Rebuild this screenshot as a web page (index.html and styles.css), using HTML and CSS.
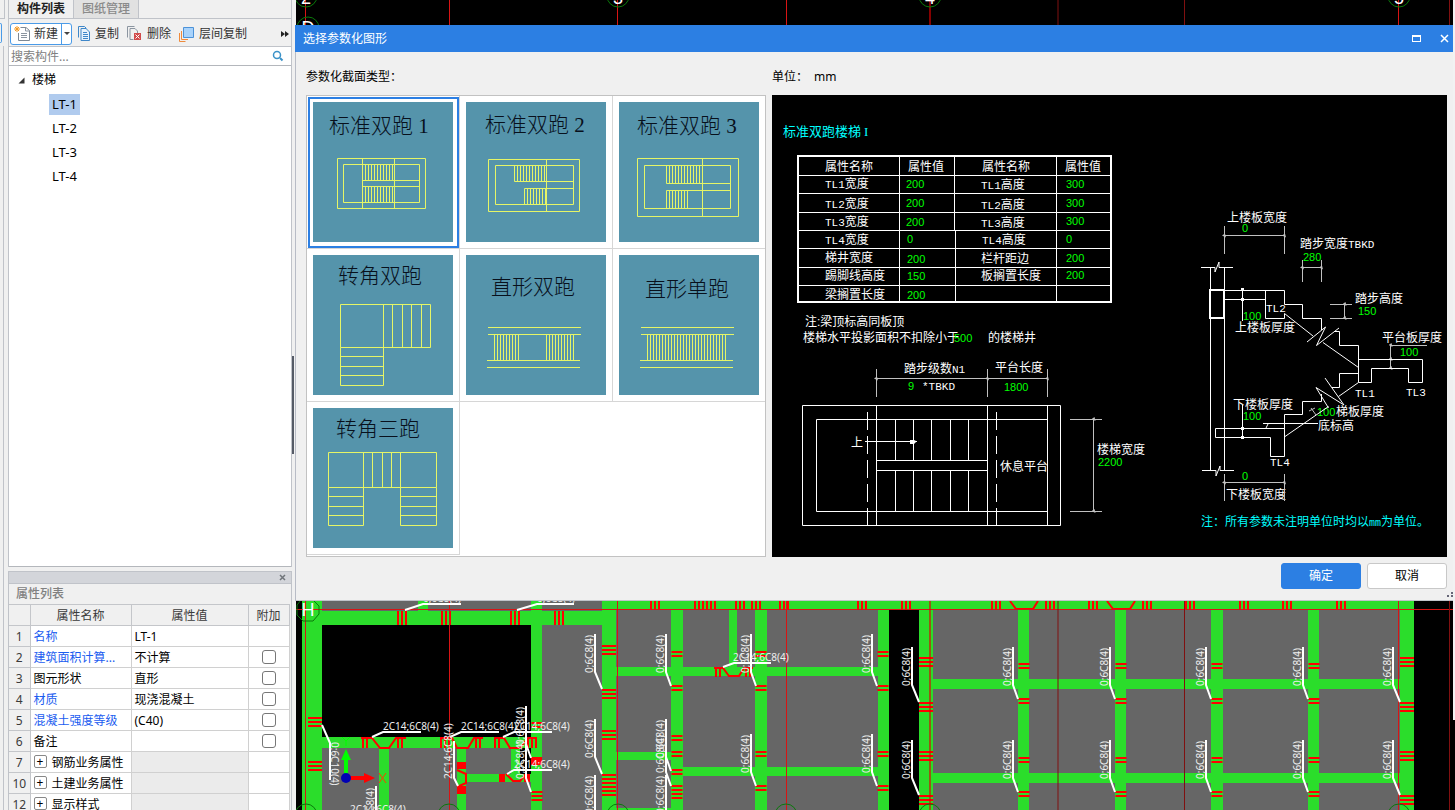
FILE: index.html
```html
<!DOCTYPE html>
<html lang="zh-CN">
<head>
<meta charset="utf-8">
<title>选择参数化图形</title>
<link rel="stylesheet" href="styles.css">
</head>
<body>
<div class="app">
  <div class="edge"><span class="edge-tab"></span></div>
  <aside class="sidebar">
    <section class="components">
      <div class="tabs" role="tablist">
        <button class="tab active" role="tab">构件列表</button>
        <button class="tab" role="tab">图纸管理</button>
      </div>
      <div class="toolbar">
        <div class="split">
          <button class="tool new">
            <svg width="18" height="16" viewBox="0 0 18 16"><path d="M4.500 7V14.500h11V4.500L12 1.500H6.500" fill="#fff" stroke="#7e8894"/><path d="M11.500 1.500V5H15.500M7 7.500h6M7 9.500h6M7 11.500h6" fill="none" stroke="#8b95a0"/><path d="M3 0V6M0 3H6M1 1L5 5M5 1L1 5" stroke="#f49a25"/></svg>
            新建</button>
          <button class="drop" aria-label="更多新建"></button>
        </div>
        <button class="tool">
          <svg width="12" height="15" viewBox="0 0 12 15"><path d="M.5 11.500V.5H6.500L8.500 2.500" fill="none" stroke="#3f87c9"/><path d="M3 2.500H8L11.500 6V14.500H3Z" fill="#e8f3fd" stroke="#3f87c9"/><path d="M5 6.500h4M5 8.500h5M5 10.500h5M5 12.500h5" stroke="#3f87c9"/></svg>
          复制</button>
        <button class="tool">
          <svg width="15" height="15" viewBox="0 0 15 15"><path d="M.5 11.500V.5H7.500M3 2.500H8L10.500 5V7M3 2.500V13.500H6.500" fill="none" stroke="#8b95a0"/><path d="M7 7h7v7H7z" fill="#d14b4b"/><path d="M8.500 8.500L12.500 12.500M12.500 8.500L8.500 12.500" stroke="#fff"/></svg>
          删除</button>
        <button class="tool">
          <svg width="15" height="16" viewBox="0 0 15 16"><path d="M.5 7V15.500H6.500M2.500 5V13.500H9" fill="none" stroke="#ee8a3c"/><path d="M4.500 1.500h10v10h-10z" fill="#a9d3fb" stroke="#4c92d8"/></svg>
          层间复制</button>
        <button class="more" aria-label="更多"><svg width="8" height="6" viewBox="0 0 8 6"><path d="M0 0L4 3L0 6ZM4 0L8 3L4 6Z" fill="#222"/></svg></button>
      </div>
      <div class="search">
        <input type="search" placeholder="搜索构件..." aria-label="搜索构件">
        <svg width="12" height="12" viewBox="0 0 12 12"><circle cx="5" cy="5" r="3.500" fill="none" stroke="#3b92c8" stroke-width="1.500"/><path d="M8 8L10.500 10.500" stroke="#3b92c8" stroke-width="2"/></svg>
      </div>
      <div class="tree">
        <div class="branch"><svg width="7" height="7" viewBox="0 0 7 7"><path d="M6.500 .5V6.500H.5Z" fill="#333"/></svg>楼梯</div>
        <ul>
          <li><button class="leaf selected">LT-1</button></li>
          <li><button class="leaf">LT-2</button></li>
          <li><button class="leaf">LT-3</button></li>
          <li><button class="leaf">LT-4</button></li>
        </ul>
      </div>
    </section>
    <section class="props">
      <div class="props-bar"><button class="close" aria-label="关闭"><svg width="7" height="7" viewBox="0 0 7 7"><path d="M1 1L6 6M6 1L1 6" stroke="#70757a" stroke-width="1.500"/></svg></button></div>
      <h2>属性列表</h2>
      <table>
        <colgroup><col class="c-no"><col class="c-name"><col class="c-value"><col class="c-add"></colgroup>
        <thead><tr><th></th><th>属性名称</th><th>属性值</th><th>附加</th></tr></thead>
        <tbody>
          <tr><th>1</th><td class="key">名称</td><td>LT-1</td><td></td></tr>
          <tr><th>2</th><td class="key">建筑面积计算...</td><td>不计算</td><td class="add"><input type="checkbox" aria-label="附加 建筑面积计算"></td></tr>
          <tr><th>3</th><td>图元形状</td><td>直形</td><td class="add"><input type="checkbox" aria-label="附加 图元形状"></td></tr>
          <tr><th>4</th><td class="key">材质</td><td>现浇混凝土</td><td class="add"><input type="checkbox" aria-label="附加 材质"></td></tr>
          <tr><th>5</th><td class="key">混凝土强度等级</td><td>(C40)</td><td class="add"><input type="checkbox" aria-label="附加 混凝土强度等级"></td></tr>
          <tr><th>6</th><td>备注</td><td></td><td class="add"><input type="checkbox" aria-label="附加 备注"></td></tr>
          <tr><th>7</th><td><button class="expand">+</button>钢筋业务属性</td><td class="off"></td><td></td></tr>
          <tr><th>10</th><td><button class="expand">+</button>土建业务属性</td><td class="off"></td><td></td></tr>
          <tr><th>12</th><td><button class="expand">+</button>显示样式</td><td class="off"></td><td></td></tr>
        </tbody>
      </table>
    </section>
  </aside>
  <div class="splitter"><span></span></div>
  <main class="workspace">
    <svg class="plan" viewBox="296 0 1159 810" preserveAspectRatio="xMinYMin slice">
      <defs>
        <g id="tag"><path d="M0 0V38L5 52" class="leader"/><text class="cad" transform="translate(-2 39) rotate(-90)">0;6C8(4)</text></g>
        <g id="tagw"><path d="M0 0V38L7 55" class="leader"/><text class="cad" transform="translate(-2 39) rotate(-90)">0;6C8(4)</text></g>
      </defs>
      <path fill="#000" d="M296 0h1159v810H296z"/>
      <path class="slab" d="M322 601h209v10H322zM322 748h209v62H322zM542 601h60v209h-60zM616 609h262v201H616zM933 609h467v201H933z"/>
      <path fill="#000" d="M520 748h11v26h-11z"/>
      <path class="beam" d="M302 601h20v209h-20zM322 611h280v14H322zM418 601h10v10h-10zM531 601h11v209h-11zM602 601h14v209h-14zM322 737h209v11H322zM379 748h10v62h-10zM457 748h9v62h-9zM511 748h9v26h-9zM466 774h65v8h-65zM616 601h303v8H616zM671 609h12v201h-12zM729 609h8v58h-8zM755 609h12v201h-12zM878 609h11v201h-11zM616 667h262v9H616zM616 752h55v8h-55zM683 767h195v9H683zM616 808h55v2h-55zM919 601h14v209h-14zM933 601h467v8H933zM1018 609h11v201h-11zM1115 609h11v201h-11zM1211 609h12v201h-12zM1308 609h11v201h-11zM1400 601h14v209h-14zM933 679h467v10H933zM933 773h467v10H933z"/>
      <g class="hatch">
        <path stroke-width="14" d="M315 717v10M315 761v10M609 645v10M609 689v10M609 730v10M609 774v10M609 786v10M926 657v10M926 702v10M926 751v10M926 795v10M1407 657v10M1407 702v10M1407 751v10M1407 795v10"/>
        <path stroke-width="11" d="M537 722v8M537 791v10M677 651v8M677 685v8M677 735v8M677 751v8M677 769v8M677 785v14M761 651v8M761 685v8M761 751v8M761 785v8M883 651v8M883 685v8M883 751v8M883 785v8M1024 663v8M1024 698v8M1024 757v8M1024 791v8M1121 663v8M1121 698v8M1121 757v8M1121 791v8M1217 663v8M1217 698v8M1217 757v8M1217 791v8M1314 663v8M1314 698v8M1314 757v8M1314 791v8"/>
        <path stroke-width="14" d="M397 618h10M441 618h10M510 618h10M554 618h10"/>
        <path stroke-width="8" d="M650 605h10M694 605h22M735 605h10M751 605h10M779 605h10M857 605h10M901 605h10M991 605h10M1045 605h10M1088 605h10M1142 605h10M1185 605h10M1239 605h10M1282 605h10M1336 605h10"/>
        <path stroke-width="10" d="M362 743h8M397 743h8M440 743h10M475 743h8M494 743h8M527 743h10M715 672h8M745 672h8"/>
      </g>
      <path fill="#f00" d="M531 757h11v8h-11zM457 762h9v7h-9zM457 786h9v8h-9zM499 774h6v8h-6zM524 774h6v8h-6z"/>
      <path class="haunch" d="M361 738h11L380 748h9L396 738h10M440 738h12L457 748h11L474 738h9M494 738h10L510 748h10L528 738h9M506 774L513 781h7L526 774M457 770L466 774V783L457 787M714 668h9L729 676h10L744 668h9M1010 601L1016 609h17L1038 601M1107 601L1113 609h17L1135 601"/>
      <path class="axis" d="M305.500 0V810M449.500 0V810M617.500 0V810M786.500 0V810M296 609.500H1453M1398.500 0V810"/>
      <path class="axis wide" d="M930 0V810"/>
      <path class="axis dark" d="M1058 0V810M1184.500 0V810M1449.500 0V810"/>
      <g class="bubble">
        <path d="M297 605L301 600H313L319 606V614L313 621H303L297 615Z"/>
        <circle cx="306" cy="-4" r="11"/><circle cx="618" cy="-4" r="11"/><circle cx="930" cy="-4" r="11"/><circle cx="1399" cy="-4" r="11"/><circle cx="308" cy="28" r="11"/>
        <circle cx="306" cy="815" r="11"/><circle cx="449" cy="815" r="11"/><circle cx="618" cy="815" r="11"/><circle cx="786" cy="815" r="11"/><circle cx="930" cy="815" r="11"/><circle cx="1399" cy="815" r="11"/>
      </g>
      <g class="bubble-text"><text x="308" y="616">H</text><text x="306" y="4">2</text><text x="618" y="4">3</text><text x="930" y="4">4</text><text x="1399" y="4">5</text><text x="308" y="34">D</text></g>
      <use href="#tagw" x="595" y="634"/><use href="#tagw" x="595" y="719"/><use href="#tagw" x="595" y="775"/>
      <use href="#tag" x="666" y="634"/><use href="#tag" x="751" y="634"/><use href="#tag" x="872" y="634"/>
      <use href="#tag" x="666" y="719"/><use href="#tag" x="666" y="734"/><use href="#tag" x="751" y="734"/><use href="#tag" x="872" y="734"/><use href="#tag" x="666" y="775"/>
      <use href="#tagw" x="912" y="647"/><use href="#tagw" x="912" y="740"/>
      <use href="#tag" x="1013" y="647"/><use href="#tag" x="1013" y="740"/><use href="#tag" x="1110" y="647"/><use href="#tag" x="1110" y="740"/>
      <use href="#tag" x="1206" y="647"/><use href="#tag" x="1206" y="740"/><use href="#tag" x="1303" y="647"/><use href="#tag" x="1303" y="740"/>
      <use href="#tagw" x="1393" y="647"/><use href="#tagw" x="1393" y="740"/>
      <use href="#tag" x="526" y="706"/><use href="#tag" x="526" y="740"/>
      <path class="leader" d="M372 737L383 732H421M450 737L461 732H499M503 737L514 732H552M507 774L514 770H552M405 610L423 604H461M517 610L537 604H574M723 667L734 663H771M376 786V810M454 741V778L458 786M322 725L330 743V780"/>
      <text class="cad" x="383" y="730">2C14;6C8(4)</text><text class="cad" x="461" y="730">2C14;6C8(4)</text><text class="cad" x="514" y="730">2C14;6C8(4)</text><text class="cad" x="514" y="768">2C14;6C8(4)</text>
      <text class="cad" x="423" y="602">0;6C8(4)</text><text class="cad" x="537" y="602">0;6C8(4)</text><text class="cad" x="733" y="661">2C14;6C8(4)</text><text class="cad" x="350" y="813">2C14;6C8(4)</text>
      <text class="cad" transform="translate(452 779) rotate(-90)">2C14;6C8(4)</text><text class="cad" transform="translate(374 826) rotate(-90)">0;6C8(4)</text><text class="cad" transform="translate(331 742) rotate(90)">0;6C10(4)</text>
      <path d="M346 776V755" stroke="#0f0" stroke-width="4"/><path d="M346 749L351 760H341Z" fill="#0f0"/>
      <path d="M348 778H366" stroke="#f00" stroke-width="4"/><path d="M375 778L364 773V783Z" fill="#f00"/><circle cx="346" cy="778" r="5" fill="#0000b4"/>
      <path d="M342 737L346 741L350 737M346 741V746" fill="none" stroke="#0f0"/><path d="M379 773L386 783M386 773L379 783" stroke="#ff3c00"/>
    </svg>
    <div class="scroll-edge"></div>
    <section class="dialog" role="dialog" aria-labelledby="dialog-title">
      <header>
        <h1 id="dialog-title">选择参数化图形</h1>
        <button aria-label="最大化"><svg width="9" height="7" viewBox="0 0 9 7"><path d="M0 1h9M.5 0V7M8.500 0V7M0 6.500H9" stroke="#fff" fill="none"/><path d="M0 0H9V2H0Z" fill="#fff"/></svg></button>
        <button aria-label="关闭"><svg width="9" height="9" viewBox="0 0 9 9"><path d="M1 1L8 8M8 1L1 8" stroke="#fff" stroke-width="1.500"/></svg></button>
      </header>
      <div class="body">
        <div class="types">
          <p>参数化截面类型：</p>
          <div class="gallery">
            <button class="shape selected" aria-label="标准双跑 1"><svg width="140" height="140" viewBox="0 0 140 140"><text x="16" y="31">标准双跑 1</text><path d="M24.500 56.500h88v50h-88zM30.500 62.500h76v38h-76zM49.500 56.500v50M81.500 56.500v50M49.500 78.500h57M49.500 84.500h57"/><path class="steps" stroke-width="16" d="M49 70.500h32M49 92.500h32"/></svg></button>
            <button class="shape" aria-label="标准双跑 2"><svg width="140" height="140" viewBox="0 0 140 140"><text x="19" y="30">标准双跑 2</text><path d="M22.500 57.500h91v52h-91zM29.500 63.500h78v39h-78zM80.500 57.500v52M48.500 79.500h59M58.500 86.500h49"/><path class="steps" stroke-width="16" d="M48 71.500h32M58 94.500h22"/></svg></button>
            <button class="shape" aria-label="标准双跑 3"><svg width="140" height="140" viewBox="0 0 140 140"><text x="18" y="31">标准双跑 3</text><path d="M18.500 56.500h101v58h-101zM25.500 63.500h86v43h-86zM83.500 56.500v58M47.500 81.500h64M47.500 88.500h64"/><path class="steps" stroke-width="18" d="M47 72.500h34M47 97.500h22"/></svg></button>
            <button class="shape" aria-label="转角双跑"><svg width="140" height="140" viewBox="0 0 140 140"><text x="25" y="28">转角双跑</text><path d="M27.500 49.500h90v43h-90zM70.500 49.500v81h-43v-38M79.500 49.500v43M89.500 49.500v43M98.500 49.500v43M108.500 49.500v43M27.500 101.500h43M27.500 111.500h43M27.500 120.500h43"/></svg></button>
            <button class="shape" aria-label="直形双跑"><svg width="140" height="140" viewBox="0 0 140 140"><text x="25" y="39">直形双跑</text><path d="M22 72.500h93M22 79.500h93M21 105.500h93M21 112.500h93"/><path class="steps" stroke-width="26" d="M28 92.500h27M80 92.500h28"/></svg></button>
            <button class="shape" aria-label="直形单跑"><svg width="140" height="140" viewBox="0 0 140 140"><text x="26" y="41">直形单跑</text><path d="M22 72.500h93M22 79.500h93M21 105.500h93M21 112.500h93"/><path class="steps" stroke-width="26" d="M28 92.500h80"/></svg></button>
            <button class="shape" aria-label="转角三跑"><svg width="140" height="140" viewBox="0 0 140 140"><text x="23" y="28">转角三跑</text><path d="M15.500 44.500h108v35h-108zM50.500 44.500v73h-35v-38M87.500 44.500v73h36v-38M59.500 44.500v35M69.500 44.500v35M78.500 44.500v35M15.500 88.500h35M15.500 98.500h35M15.500 107.500h35M87.500 88.500h36M87.500 98.500h36M87.500 107.500h36"/></svg></button>
          </div>
        </div>
        <div class="preview">
          <p>单位：<span class="unit">mm</span></p>
          <svg class="drawing" viewBox="772 95 675 462">
            <defs><marker id="end" viewBox="0 0 4 4" refX="2" refY="2" markerWidth="4" markerHeight="4"><path d="M0 2L3 0L4 4Z" fill="#c0c0c0"/></marker></defs>
            <text class="title" x="783" y="136">标准双跑楼梯<tspan x="864" class="roman">I</tspan></text>
            <path class="frame" d="M798 156H1111V302H798Z"/>
            <path class="line" d="M899.500 156V302M954.500 156V230M955.500 230V302M1056.500 156V302M798 175.500H1111M798 193.500H1111M798 212.500H1111M798 230.500H1111M798 248.500H1111M798 267.500H1111M798 285.500H1111"/>
            <g class="name">
              <text x="825" y="171">属性名称</text><text x="908" y="171">属性值</text><text x="982" y="171">属性名称</text><text x="1065" y="171">属性值</text>
              <text x="825" y="188"><tspan class="lat">TL1</tspan>宽度</text><text x="981" y="189"><tspan class="lat">TL1</tspan>高度</text>
              <text x="825" y="208"><tspan class="lat">TL2</tspan>宽度</text><text x="981" y="209"><tspan class="lat">TL2</tspan>高度</text>
              <text x="825" y="226"><tspan class="lat">TL3</tspan>宽度</text><text x="981" y="227"><tspan class="lat">TL3</tspan>高度</text>
              <text x="825" y="244"><tspan class="lat">TL4</tspan>宽度</text><text x="982" y="244"><tspan class="lat">TL4</tspan>高度</text>
              <text x="825" y="262">梯井宽度</text><text x="981" y="263">栏杆距边</text>
              <text x="825" y="280">踢脚线高度</text><text x="981" y="280">板搁置长度</text><text x="825" y="299">梁搁置长度</text>
              <text x="805" y="326">注:梁顶标高同板顶</text><text x="803" y="342">楼梯水平投影面积不扣除小于</text><text x="988" y="342">的楼梯井</text>
              <text x="904" y="373">踏步级数<tspan class="lat">N1</tspan></text><text x="922" y="390" class="lat">*TBKD</text><text x="995" y="372">平台长度</text>
              <text x="851" y="447">上</text><text x="1000" y="471">休息平台</text><text x="1097" y="454">楼梯宽度</text>
              <text x="1227" y="222">上楼板宽度</text><text x="1300" y="248">踏步宽度<tspan class="lat">TBKD</tspan></text><text x="1266" y="312" class="lat">TL2</text>
              <text x="1235" y="332">上楼板厚度</text><text x="1355" y="303">踏步高度</text><text x="1382" y="342">平台板厚度</text>
              <text x="1355" y="397" class="lat">TL1</text><text x="1406" y="396" class="lat">TL3</text><text x="1233" y="409">下楼板厚度</text>
              <text x="1336" y="416">梯板厚度</text><text x="1318" y="430">底标高</text><text x="1270" y="466" class="lat">TL4</text><text x="1226" y="499">下楼板宽度</text>
            </g>
            <g class="value">
              <text x="906" y="188">200</text><text x="1066" y="188">300</text><text x="906" y="207">200</text><text x="1066" y="207">300</text>
              <text x="906" y="226">200</text><text x="1066" y="225">300</text><text x="907" y="243">0</text><text x="1066" y="243">0</text>
              <text x="907" y="263">200</text><text x="1066" y="262">200</text><text x="907" y="280">150</text><text x="1066" y="279">200</text><text x="907" y="299">200</text>
              <text x="954" y="342">500</text><text x="908" y="390">9</text><text x="1004" y="391">1800</text><text x="1098" y="466">2200</text>
              <text x="1242" y="232">0</text><text x="1303" y="261">280</text><text x="1243" y="320">100</text><text x="1358" y="315">150</text><text x="1400" y="356">100</text>
              <text x="1243" y="420">100</text><text x="1317" y="416">100</text><text x="1242" y="480">0</text>
            </g>
            <path class="line" d="M802.500 405.500h258v120h-258zM1047.500 419.500H816.500V511.500H1047.500M876.500 405.500v120M987.500 405.500v120M1047.500 405.500v120M876.500 460.500h111M876.500 470.500h111M895.500 419.500v41M913.500 419.500v41M931.500 419.500v41M950.500 419.500v41M968.500 419.500v41M895.500 470.500v41M913.500 470.500v41M931.500 470.500v41M950.500 470.500v41M968.500 470.500v41M865 441.500H917"/>
            <path class="line" stroke-dasharray="18 6" d="M867.500 412V525M996.500 412V525"/>
            <path fill="#fff" d="M910 440h4l2 1v1l-2 2h-4z"/>
            <g class="dim">
              <path d="M876.500 369v28M987.500 369v28M1047.500 369v28M1070 419.500h32M1070 511.500h32M1224.500 226v28M1284.500 226v28M1302.500 260v22M1321.500 260v22M1330 304.500h22M1330 318.500h22M1390.500 345.500H1427M1224.500 474v27M1284.500 474v27M1309 411L1315 408M1311 408L1316 415"/>
              <path class="ends" d="M876 378.500H987H1047"/><path class="ends" d="M1093.500 419V511"/><path class="ends" d="M1224 235.500H1284"/><path class="ends" d="M1302 267.500H1321"/><path class="ends" d="M1344.500 304V318"/><path class="ends" d="M1390.500 345V359V368"/><path class="ends" d="M1224 482.500H1284"/>
            </g>
            <path class="frame" d="M1210 290h14v28h-14z"/>
            <path class="line" d="M1210.500 267.500V470.500M1224.500 267.500V470.500M1201 267.500H1215V272L1219 262V267.500H1233M1202 470.500H1216V476L1220 466V470.500H1234M1224.500 290.500H1284.500V304.500H1302.500V318.500H1321.500V330M1224.500 299.500H1265.500M1265.500 290.500V318.500H1284.500V313.500L1313 336M1307 342L1325.500 327L1316.500 345.500L1339 328M1334 331.500H1339.500V345.500H1358.500V382.500H1371.500V368.500H1408.500V382.500H1422.500V359.500H1358.500M1323 342.500L1358.500 367.500"/>
            <path class="line" d="M1358.500 373.500H1339.500V387.500H1332M1358.500 382.500L1338.500 396.500M1325 378L1344 405L1316 387.500L1328.500 408M1321.500 394V401.500H1302.500V414.500H1284.500V456.500H1270.500V437.500H1215.500V428.500H1284.500M1285 436.500L1328.500 406.500M1263 423.500H1318M1268 424L1266 428M1242.500 289V321M1242.500 405V438"/>
            <path fill="#fff" d="M1241 288h3v3h-3zM1241 298h3v3h-3zM1241 427h3v3h-3zM1241 436h3v3h-3z"/>
            <text class="note" x="1201" y="526">注：所有参数未注明单位时均以<tspan class="mm">mm</tspan>为单位。</text>
          </svg>
        </div>
      </div>
      <footer><button class="primary">确定</button><button>取消</button><svg class="grip" width="6" height="6" viewBox="0 0 6 6"><path d="M4 0h2v2H4zM0 3h2v2H0zM4 3h2v2H4z" fill="#667"/></svg></footer>
    </section>
  </main>
</div>
</body>
</html>
```
FILE: styles.css
```css
* { box-sizing: border-box; }
html, body { height: 100%; }
body {
  margin: 0;
  overflow: hidden;
  background: #f0f0f0;
  color: #1a1a1a;
  font: 12px/16px "Noto Sans", "Noto Sans CJK SC", sans-serif;
}
button, input { font: inherit; color: inherit; }
button { margin: 0; padding: 0; border: 0; background: none; }
h1, h2, p, ul { margin: 0; padding: 0; font-size: 12px; font-weight: 400; }
svg { display: block; flex: none; }

.app { display: flex; height: 100vh; overflow: hidden; }
.edge { width: 8px; flex: none; background: linear-gradient(#c0c3c9, #c0c3c9) 3px 46px / 1px 100% no-repeat; }
.edge::before { content: ""; display: block; width: 4px; height: 18px; border-right: 1px solid #c0c3c9; border-bottom: 1px solid #c0c3c9; }
.edge-tab { display: block; width: 2px; height: 20px; margin-top: 4px; border: 1px solid #4a9be8; border-left: 0; border-radius: 0 3px 3px 0; }
.sidebar { width: 284px; flex: none; display: flex; flex-direction: column; gap: 4px; }
.components { flex: none; height: 70vh; display: flex; flex-direction: column; border-left: 1px solid #c0c3c9; border-right: 1px solid #c0c3c9; }

.tabs { display: flex; height: 19px; flex: none; border-bottom: 1px solid #c0c3c9; }
.tab { height: 18px; padding: 0 8px 1px; border-right: 1px solid #c0c3c9; background: #e1e1e1; color: #8a8a8a; font-weight: 500; }
.tab.active { background: #f0f0f0; color: #222; font-weight: 700; }
.toolbar { display: flex; align-items: center; gap: 8px; height: 28px; flex: none; padding: 2px 2px 0 1px; border-bottom: 1px solid #c0c3c9; }
.tool { display: flex; align-items: center; gap: 5px; height: 20px; white-space: nowrap; color: #333; }
.split { display: flex; height: 22px; margin-right: -2px; border: 1px solid #4a9be8; border-radius: 3px; background: #fff; }
.new { padding: 0 3px; gap: 2px; }
.drop { display: flex; align-items: center; width: 10px; padding-left: 2px; border-left: 1px solid #4a9be8; }
.drop::after { content: ""; border: 3px solid transparent; border-top-color: #444; border-bottom: 0; }
.more { margin-left: auto; width: 8px; }
.search { display: flex; align-items: center; height: 19px; flex: none; padding: 0 7px 0 2px; background: #fff; border-bottom: 1px solid #b4b7bc; }
.search input { flex: 1; min-width: 0; height: 18px; padding: 0; border: 0; outline: 0; background: none; }
.search input::placeholder { color: #808080; opacity: 1; }
.tree { flex: 1; padding-top: 2px; background: #fff; border-bottom: 1px solid #b4b7bc; color: #000; }
.branch { display: flex; align-items: center; gap: 7px; height: 24px; padding-left: 9px; }
.tree ul { list-style: none; padding-left: 40px; }
.tree li { display: flex; align-items: center; height: 24px; }
.leaf { height: 21px; padding: 0 3px; font-size: 13px; }
.leaf.selected { background: #b0cbee; }

.props { flex: 1; min-height: 0; overflow: hidden; border: 1px solid #c0c3c9; border-bottom: 0; }
.props-bar { display: flex; justify-content: flex-end; align-items: center; height: 12px; padding-right: 5px; background: #d3d5da; border-bottom: 1px solid #c0c3c9; }
.props h2 { height: 20px; padding-left: 7px; line-height: 20px; font-weight: 500; color: #808080; }
.props table { width: 280px; border-collapse: collapse; table-layout: fixed; background: #fff; }
.c-no { width: 21px; } .c-name { width: 101px; } .c-value { width: 117px; } .c-add { width: 41px; }
.props tr { height: 21px; }
.props th, .props td { height: 21px; padding: 1px 0 0 3px; border: 1px solid #d0d0d0; text-align: left; white-space: nowrap; line-height: 16px; overflow: hidden; }
.props th { padding: 1px 0 0; background: #f0f0f0; border-color: #c4c6ca; font-weight: 400; text-align: center; color: #3a3a3a; }
.props tr > :first-child { border-left: 0; }
.props td { color: #000; }
.props td.key { color: #1a5cf0; }
.props td.off { background: #ebebeb; }
.props td.add { padding: 0; text-align: center; }
.add input { appearance: none; display: block; width: 14px; height: 14px; margin: 0 auto; border: 1px solid #777; border-radius: 3px; background: #fff; }
.expand { width: 13px; height: 13px; margin-right: 5px; border: 1px solid #888; border-radius: 2px; line-height: 10px; vertical-align: 1px; }

.splitter { width: 4px; flex: none; display: flex; align-items: center; }
.splitter span { width: 2px; height: 98px; background: #555b66; }

.workspace { position: relative; flex: 1; min-width: 0; background: #000; }
.plan { width: 100%; height: 100%; }
.slab { fill: #666; }
.beam { fill: #2bdd2b; }
.hatch path { stroke: #f00; stroke-dasharray: 2 2; fill: none; }
.haunch { fill: none; stroke: #f00; stroke-width: 2; }
.axis { fill: none; stroke: #d81414; }
.axis.wide { stroke: #e00000; stroke-width: 2; opacity: .6; }
.axis.dark { stroke: #801010; }
.leader { fill: none; stroke: #fff; stroke-width: 2; }
.cad { fill: #eee; font: 10px "Noto Sans", sans-serif; }
.bubble { fill: none; stroke: #0a7a0a; }
.bubble-text { fill: #fff; font: 18px "Liberation Sans", sans-serif; text-anchor: middle; }
.scroll-edge { position: absolute; top: 0; right: 0; width: 2px; height: 720px; background: #f2f2f2; }

.dialog { position: absolute; top: 25px; left: -1px; right: 2px; display: flex; flex-direction: column; background: #f0f0f0; border-left: 1px solid #b8bcc6; border-bottom: 1px solid #c0c3c9; }
.dialog header { display: flex; align-items: center; gap: 19px; height: 27px; margin-left: -1px; padding: 0 4px 0 8px; background: #2c7fe3; color: #fff; }
.dialog h1 { flex: 1; }
.body { flex: 1; display: flex; gap: 6px; padding: 0 6px 0 10px; color: #000; }
.body p { height: 43px; padding-top: 17px; }
.unit { margin-left: 6px; }
.types { width: 460px; flex: none; display: flex; flex-direction: column; }
.gallery { flex: 1; display: grid; grid-template-columns: 153px 153px 1fr; grid-auto-rows: 153px; align-content: start; border: 1px solid #c2c2c2; background: #fff; }
.shape { padding: 6px; border-right: 1px solid #d6d6d6; border-bottom: 1px solid #d6d6d6; }
.shape:nth-child(3n) { border-right: 0; }
.shape.selected { outline: 2px solid #2c7fe3; outline-offset: -3px; }
.shape svg { background: #5594ab; }
.shape path { fill: none; stroke: #e6f566; }
.shape .steps { stroke-dasharray: 1 2; }
.shape text { fill: #08101c; font: 300 21px "Liberation Serif", "Noto Sans CJK SC", sans-serif; }
.preview { flex: 1; min-width: 0; }
.drawing { width: 100%; background: #000; }
.drawing text { font: 12px "Liberation Sans", "Noto Sans CJK SC", sans-serif; }
.drawing .title { fill: #0ff; font-size: 13px; }
.drawing .roman { font-family: "Liberation Serif", serif; }
.drawing .note { fill: #0ff; }
.drawing .mm { font: 10px "Liberation Mono", monospace; }
.drawing .name { fill: #fff; }
.drawing .lat { font: 11px "Liberation Mono", monospace; }
.drawing .value { fill: #0f0; }
.drawing .value text { font-size: 11px; }
.line { fill: none; stroke: #fff; }
.frame { fill: none; stroke: #fff; stroke-width: 2; }
.dim path { fill: none; stroke: #c0c0c0; }
.dim .ends { marker: url(#end); }
.dialog footer { position: relative; display: flex; justify-content: flex-end; gap: 6px; height: 43px; padding: 6px 6px 0; }
.dialog footer button { width: 80px; height: 26px; border: 1px solid #c8c8c8; border-radius: 3px; background: #fff; color: #000; }
.dialog footer .primary { border-color: #2c7fe3; background: #2c7fe3; color: #fff; }
.grip { position: absolute; right: 0; bottom: 2px; }
```
